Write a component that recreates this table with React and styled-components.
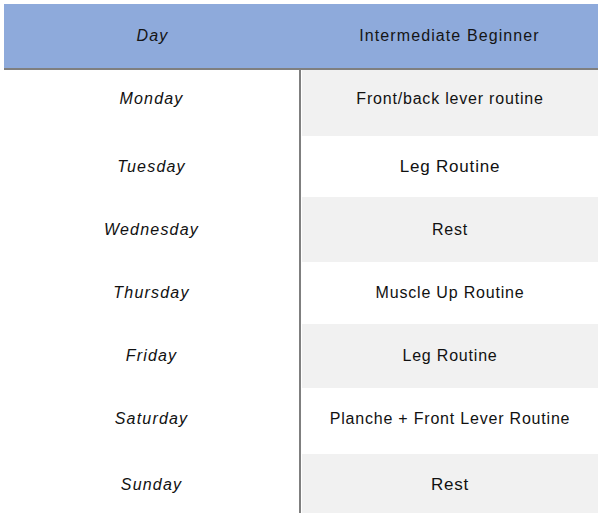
import React from "react";
import styled, { createGlobalStyle } from "styled-components";

const Global = createGlobalStyle`
  html, body { margin: 0; padding: 0; background: #ffffff; }
  body { font-family: "Liberation Sans", Arial, sans-serif; }
`;

const Page = styled.div`
  padding: 4px 2px 0 4px;
  width: 594px;
`;

const Table = styled.div`
  display: flex;
  flex-direction: column;
  width: 594px;
`;

const HeaderRow = styled.div`
  display: grid;
  grid-template-columns: 297px 1fr;
  height: 64px;
  background: #8eaadb;
  border-bottom: 2px solid #7f7f7f;
`;

const HeadCell = styled.div`
  display: flex;
  align-items: center;
  justify-content: center;
  font-size: 16px;
  letter-spacing: 1.1px;
  color: #151515;
  font-style: ${(p) => (p.$italic ? "italic" : "normal")};
`;

const Row = styled.div`
  display: grid;
  grid-template-columns: 297px 1fr;
  height: ${(p) => p.$h}px;
`;

const DayCell = styled.div`
  display: flex;
  align-items: center;
  justify-content: center;
  border-right: 2px solid #7f7f7f;
  font-size: 16px;
  font-style: italic;
  letter-spacing: 1.2px;
  color: #111111;
  padding-bottom: ${(p) => p.$shift || 0}px;
`;

const RoutineCell = styled.div`
  display: flex;
  align-items: center;
  justify-content: center;
  margin-left: 1px;
  background: ${(p) => (p.$shaded ? "#f1f1f1" : "#ffffff")};
  font-size: ${(p) => p.$size || 16}px;
  letter-spacing: 0.8px;
  color: #111111;
  padding-bottom: ${(p) => p.$shift || 0}px;
`;

const rows = [
  { day: "Monday", routine: "Front/back lever routine", h: 66, shift: 8 },
  { day: "Tuesday", routine: "Leg Routine", h: 61, size: 17 },
  { day: "Wednesday", routine: "Rest", h: 65 },
  { day: "Thursday", routine: "Muscle Up Routine", h: 62 },
  { day: "Friday", routine: "Leg Routine", h: 64 },
  { day: "Saturday", routine: "Planche + Front Lever Routine", h: 66, shift: 4 },
  { day: "Sunday", routine: "Rest", h: 64, size: 17, shift: 2 },
];

export default function App() {
  return (
    <>
      <Global />
      <Page>
        <Table>
          <HeaderRow>
            <HeadCell $italic>Day</HeadCell>
            <HeadCell>Intermediate Beginner</HeadCell>
          </HeaderRow>
          {rows.map((r, i) => (
            <Row key={r.day} $h={r.h}>
              <DayCell $shift={r.shift}>{r.day}</DayCell>
              <RoutineCell $shaded={i % 2 === 0} $size={r.size} $shift={r.shift}>
                {r.routine}
              </RoutineCell>
            </Row>
          ))}
        </Table>
      </Page>
    </>
  );
}
